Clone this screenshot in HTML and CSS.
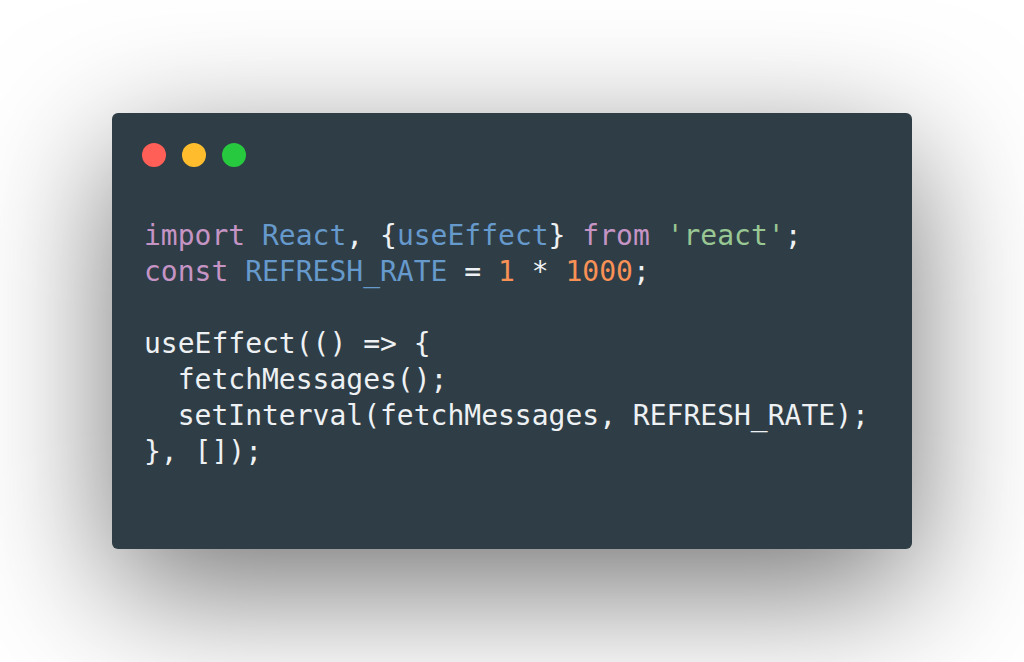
FILE: index.html
```html
<!DOCTYPE html>
<html>
<head>
<meta charset="utf-8">
<link rel="stylesheet" href="styles.css">
</head>
<body>
<div class="window">
  <div class="header">
    <span class="dot red"></span>
    <span class="dot yellow"></span>
    <span class="dot green"></span>
  </div>
<pre class="code"><span class="kw">import</span> <span class="id">React</span>, {<span class="id">useEffect</span>} <span class="kw">from</span> <span class="str">'react'</span>;
<span class="kw">const</span> <span class="id">REFRESH_RATE</span> = <span class="num">1</span> * <span class="num">1000</span>;

useEffect(() =&gt; {
  fetchMessages();
  setInterval(fetchMessages, REFRESH_RATE);
}, []);</pre>
</div>
</body>
</html>
```

FILE: styles.css
```css
html, body {
  margin: 0;
  padding: 0;
  background: #ffffff;
}
body {
  width: 1024px;
  height: 662px;
  overflow: hidden;
}
.window {
  width: 800px;
  height: 436px;
  margin: 113px 0 0 112px;
  background: #2f3e46;
  border-radius: 6px;
  box-shadow: 0 40px 136px rgba(0, 0, 0, 0.55);
  overflow: hidden;
}
.header {
  display: flex;
  gap: 16px;
  padding: 30px 0 0 30px;
}
.dot {
  width: 24px;
  height: 24px;
  border-radius: 50%;
}
.red { background: #ff5f56; }
.yellow { background: #ffbd2e; }
.green { background: #27c93f; }
.code {
  margin: 50.5px 0 0 32px;
  font-family: "DejaVu Sans Mono", monospace;
  font-size: 28px;
  line-height: 36px;
  color: #eef1f3;
  white-space: pre;
}
.kw { color: #c594c5; }
.id { color: #6699cc; }
.str { color: #99c794; }
.num { color: #f99157; }
```
